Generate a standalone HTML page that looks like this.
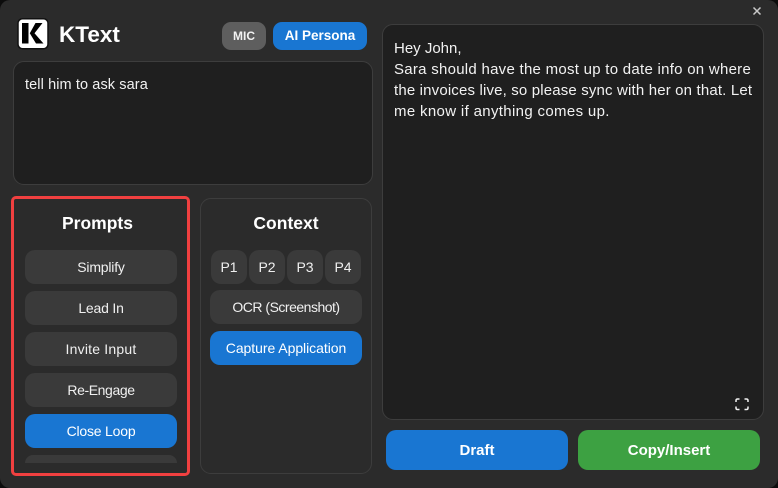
<!DOCTYPE html>
<html><head><meta charset="utf-8"><style>
*{box-sizing:border-box;margin:0;padding:0}
html,body{width:778px;height:488px;overflow:hidden;background:#0c0c0c}
body{font-family:"Liberation Sans",Arial,sans-serif;color:#f2f2f2;position:relative}
#win{position:absolute;left:0;top:0;width:778px;height:488px;background:#2b2b2b;border-radius:10px;overflow:hidden}
.a{position:absolute}
.box{position:absolute;background:#1f1f1f;border:1px solid #3d3d3d;border-radius:11px}
.b{position:absolute;height:34px;border-radius:10px;background:#3a3a3a;text-align:center;line-height:34px;font-size:14px;white-space:nowrap;color:#f0f0f0}
.blue{background:#1976d2;color:#fff}
.h{position:absolute;font-weight:bold;font-size:17.5px;text-align:center;white-space:nowrap;color:#fff}
.t{position:absolute;white-space:nowrap;font-size:15px;color:#f2f2f2}
.t span{display:block}
</style></head><body>
<div id="win">
<svg class="a" style="left:17px;top:18px" width="32" height="32" viewBox="0 0 32 32">
<rect x="1" y="0.75" width="30" height="30" rx="4.500" fill="#fff" stroke="#111" stroke-width="1.500"/>
<rect x="5" y="5" width="6.500" height="20.500" fill="#000"/>
<path d="M18.500 5H25.500L17.500 15.300L26.500 25.500H19L12.800 15.300z" fill="#000"/>
</svg>
<div class="a" style="left:59px;top:21px;font-size:22.500px;font-weight:bold;color:#fff;white-space:nowrap;line-height:28px">KText</div>
<div class="a" style="left:222px;top:22px;width:44px;height:28px;border-radius:9px;background:#5e5e5e;text-align:center;line-height:29px;font-size:12px;font-weight:bold;color:#f2f2f2">MIC</div>
<div class="a" style="left:273px;top:22px;width:94px;height:28px;border-radius:9px;background:#1976d2;text-align:center;line-height:28px;font-size:13.500px;font-weight:bold;color:#fff;white-space:nowrap">AI Persona</div>

<div class="box" style="left:13px;top:61px;width:360px;height:124px"></div>
<div class="t" style="left:25px;top:76px;line-height:18px;font-size:14.500px;letter-spacing:.1px">tell him to ask sara</div>

<div class="a" style="left:11px;top:196px;width:179px;height:280px;border:3px solid #f04040;border-radius:5px;background:#2b2b2b;overflow:hidden">
<div class="h" style="left:-3px;width:173px;top:13px;line-height:22px">Prompts</div>
<div class="b" style="left:11px;top:51px;width:152px;letter-spacing:-.2px">Simplify</div>
<div class="b" style="left:11px;top:92px;width:152px;letter-spacing:-.2px">Lead In</div>
<div class="b" style="left:11px;top:133px;width:152px;letter-spacing:.2px">Invite Input</div>
<div class="b" style="left:11px;top:174px;width:152px;letter-spacing:-.4px">Re-Engage</div>
<div class="b blue" style="left:11px;top:215px;width:152px;letter-spacing:-.2px">Close Loop</div>
<div class="a" style="left:11px;top:256px;width:152px;height:8px;border-radius:10px 10px 0 0;background:#3a3a3a"></div>
</div>

<div class="a" style="left:200px;top:198px;width:172px;height:276px;border:1px solid #3d3d3d;border-radius:11px;background:#2b2b2b"></div>
<div class="h" style="left:200px;width:172px;top:212px;line-height:22px">Context</div>
<div class="b" style="left:211px;top:250px;width:36px">P1</div>
<div class="b" style="left:249px;top:250px;width:36px">P2</div>
<div class="b" style="left:287px;top:250px;width:36px">P3</div>
<div class="b" style="left:325px;top:250px;width:36px">P4</div>
<div class="b" style="left:210px;top:290px;width:152px;letter-spacing:-.5px">OCR (Screenshot)</div>
<div class="b blue" style="left:210px;top:331px;width:152px;letter-spacing:-.05px">Capture Application</div>

<div class="box" style="left:382px;top:24px;width:382px;height:396px"></div>
<div class="t" style="left:394px;top:38px;line-height:21px"><span>Hey John,</span><span style="letter-spacing:.27px">Sara should have the most up to date info on where</span><span style="letter-spacing:.16px">the invoices live, so please sync with her on that. Let</span><span style="letter-spacing:.34px">me know if anything comes up.</span></div>

<svg class="a" style="left:735px;top:398px" width="14" height="13" viewBox="0 0 14 13" fill="none" stroke="#f2f2f2" stroke-width="1.500">
<path d="M1 4V2.500Q1 1 2.500 1H4.500M9.500 1h2Q13 1 13 2.500V4M13 8.500v1.500Q13 11.500 11.500 11.500H9.500M4.500 11.500H2.500Q1 11.500 1 10V8.500"/>
</svg>
<svg class="a" style="left:752px;top:6px" width="10" height="10" viewBox="0 0 10 10" stroke="#c8c8c8" stroke-width="1.500">
<path d="M1.500 1.500l7 7M8.500 1.500l-7 7"/>
</svg>

<div class="a" style="left:386px;top:430px;width:182px;height:40px;border-radius:10px;background:#1976d2;text-align:center;line-height:42px;font-size:15px;font-weight:bold;color:#fff">Draft</div>
<div class="a" style="left:578px;top:430px;width:182px;height:40px;border-radius:10px;background:#3da142;text-align:center;line-height:42px;font-size:15px;font-weight:bold;color:#fff">Copy/Insert</div>
</div>
</body></html>
